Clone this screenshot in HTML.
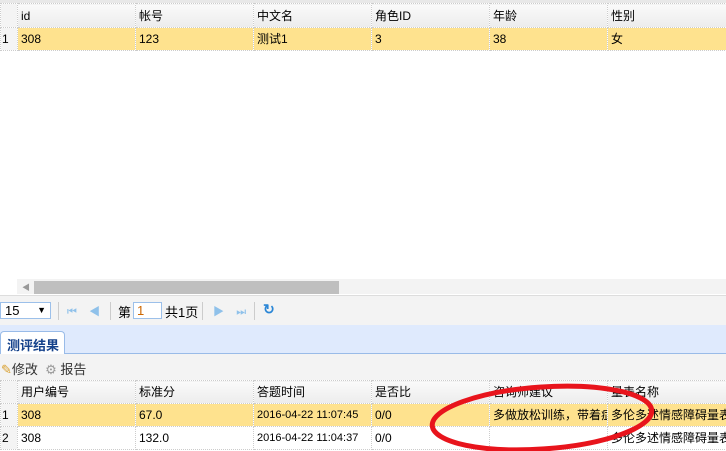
<!DOCTYPE html>
<html><head><style>
body{margin:0;width:726px;height:451px;overflow:hidden;background:#fff;font:12px "Liberation Sans","Noto Sans CJK SC",sans-serif;position:relative}
.a{position:absolute}
table{border-collapse:collapse;table-layout:fixed;position:absolute;left:0;font-size:12px}
td{border:1px dotted #ccc;padding:0 0 0 3px;white-space:nowrap;overflow:hidden;height:23px;line-height:22px;box-sizing:border-box}
.h td{background:linear-gradient(#fafafa,#ececec)}
.s td{background:#fee28e}
td.n{background:#f4f4f4;padding:0;padding-left:1px}
.sep{position:absolute;top:302px;width:1px;height:18px;background:#ccc}
</style></head><body>
<div class="a" style="left:0;top:0;width:726px;height:3px;background:#e8e8e8"></div>
<table style="top:3px;width:726px"><colgroup><col width=17><col width=118><col width=118><col width=118><col width=118><col width=118><col width=119></colgroup>
<tr class="h"><td class="n" style="height:24px"></td><td>id</td><td>帐号</td><td>中文名</td><td>角色ID</td><td>年龄</td><td>性别</td></tr>
<tr class="s"><td class="n">1</td><td>308</td><td>123</td><td>测试1</td><td>3</td><td>38</td><td>女</td></tr></table>
<div class="a" style="left:17px;top:279px;width:709px;height:15px;background:#f3f3f3"></div>
<div class="a" style="left:22px;top:282px;color:#999;font-size:8px">◀</div>
<div class="a" style="left:34px;top:281px;width:305px;height:13px;background:#bfbfbf"></div>
<div class="a" style="left:0;top:295px;width:726px;height:30px;background:#f3f3f3;border-top:1px solid #ddd"></div>
<div class="a" style="left:0;top:302px;width:45px;height:15px;border:1px solid #9cc0ea;background:#fff;font-size:13px;padding-left:4px;line-height:15px">15<span style="position:absolute;right:4px;font-size:9px;top:0">▼</span></div>
<div class="sep" style="left:58px"></div><div class="sep" style="left:110px"></div><div class="sep" style="left:202px"></div><div class="sep" style="left:254px"></div>
<div class="a" style="left:67px;top:303px;color:#8fc1ea;font-size:11px">⏮&nbsp;&nbsp;&nbsp;&nbsp;◀</div>
<div class="a" style="left:118px;top:302px;font-size:13px">第</div>
<div class="a" style="left:133px;top:302px;width:24px;height:15px;border:1px solid #9cc0ea;background:#fff;color:#c60;padding-left:3px;font-size:13px;line-height:15px">1</div>
<div class="a" style="left:165px;top:302px;font-size:13px">共1页</div>
<div class="a" style="left:213px;top:303px;color:#8fc1ea;font-size:11px">▶&nbsp;&nbsp;&nbsp;&nbsp;⏭</div>
<div class="a" style="left:263px;top:301px;color:#2a86d6;font-size:14px;font-weight:bold">↻</div>
<div class="a" style="left:0;top:325px;width:726px;height:28px;background:#dfeafd;border-bottom:1px solid #99bbe8"></div>
<div class="a" style="left:0;top:331px;width:65px;height:23px;background:#fff;border:1px solid #99bbe8;border-bottom:none;border-radius:4px 4px 0 0;font-weight:bold;color:#15428b;font-size:13px;padding:3px 0 0 6px;box-sizing:border-box">测评结果</div>
<div class="a" style="left:0;top:354px;width:726px;height:26px;background:#f3f3f3"></div>
<div class="a" style="left:1px;top:359px;font-size:13px;color:#333"><span style="color:#d9a030">✎</span>修改 &nbsp;<span style="color:#999">⚙</span> 报告</div>
<table style="top:380px;width:726px"><colgroup><col width=17><col width=118><col width=118><col width=118><col width=118><col width=118><col width=119></colgroup>
<tr class="h"><td class="n"></td><td>用户编号</td><td>标准分</td><td>答题时间</td><td>是否比</td><td>咨询师建议</td><td>量表名称</td></tr>
<tr class="s"><td class="n">1</td><td>308</td><td>67.0</td><td style="font-size:11px">2016-04-22 11:07:45</td><td>0/0</td><td>多做放松训练，带着症状</td><td>多伦多述情感障碍量表</td></tr>
<tr><td class="n">2</td><td>308</td><td>132.0</td><td style="font-size:11px">2016-04-22 11:04:37</td><td>0/0</td><td></td><td>多伦多述情感障碍量表</td></tr></table>
<svg class="a" style="left:0;top:0" width="726" height="451"><ellipse cx="542" cy="418" rx="110" ry="31" fill="none" stroke="#e8141c" stroke-width="5" transform="rotate(-4 542 418)"/></svg>
</body></html>
